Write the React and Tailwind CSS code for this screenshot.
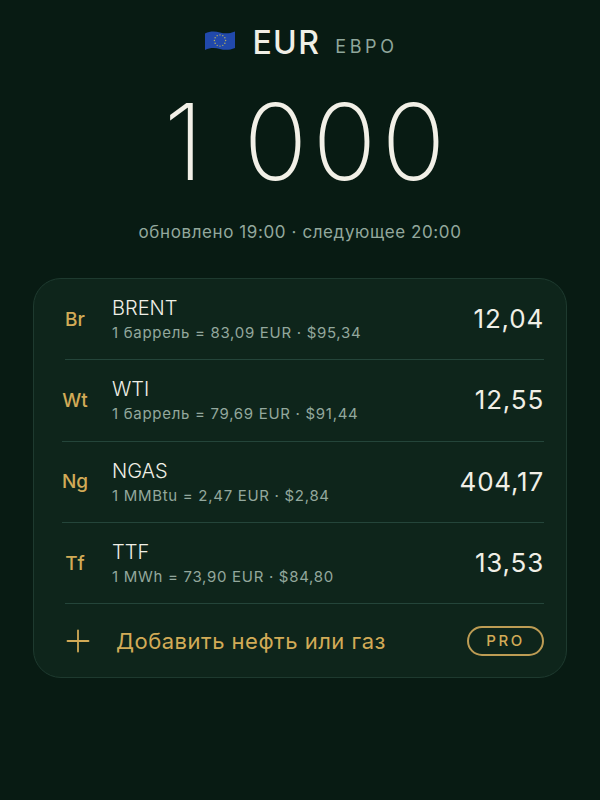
import React from 'react';
import { Plus } from 'lucide-react';

const rows = [
  { code: 'Br', name: 'BRENT', sub: '1 баррель = 83,09 EUR · $95,34', value: '12,04', line: 'ml-[3px]' },
  { code: 'Wt', name: 'WTI', sub: '1 баррель = 79,69 EUR · $91,44', value: '12,55', line: 'ml-0' },
  { code: 'Ng', name: 'NGAS', sub: '1 MMBtu = 2,47 EUR · $2,84', value: '404,17', line: 'ml-0' },
  { code: 'Tf', name: 'TTF', sub: '1 MWh = 73,90 EUR · $84,80', value: '13,53', line: 'ml-[3px]' },
];

const EuFlag = () => {
  const stars = Array.from({ length: 12 }, (_, i) => {
    const a = (i / 12) * Math.PI * 2;
    return [15 + Math.cos(a) * 5.6, 10.5 + Math.sin(a) * 5.6];
  });
  return (
    <svg width="30" height="21" viewBox="0 0 30 21" className="mb-[3px]" aria-hidden="true">
      <path d="M0 3.5 C5 1 10 1 15 2.5 C20 4 25 3.5 30 1.5 V18 C25 20 20 20.5 15 19 C10 17.5 5 17.5 0 20 Z" fill="#2149ab" />
      {stars.map(([x, y], i) => (
        <circle key={i} cx={x} cy={y} r="0.7" fill="#b9b25c" />
      ))}
    </svg>
  );
};

export default function App() {
  return (
    <div className="w-[600px] h-[800px] overflow-hidden bg-[#081b13] font-['Inter',sans-serif] flex flex-col items-center">
      <div className="h-[84px] pl-[3px] flex items-center justify-center">
        <EuFlag />
        <span className="ml-[17px] mt-[1px] text-[32px] leading-[40px] font-medium tracking-[1.4px] text-[#f0efe6]">EUR</span>
        <span className="ml-[15px] mt-[9px] text-[18px] leading-[24px] tracking-[3.6px] text-[#8fa69b]">ЕВРО</span>
      </div>
      <div className="mt-[-7px] pl-[14px] h-[130px] text-[106px] leading-[130px] font-[150] tracking-[5px] text-[#f2f0e7]">1 000</div>
      <div className="mt-[13px] text-[17px] leading-[24px] tracking-[0.6px] text-[#93a89d]">обновлено 19:00 · следующее 20:00</div>
      <div className="mt-[34px] w-[534px] h-[400px] rounded-[28px] border border-[#1e3a2f] bg-[#0e251b] pl-[28px] pr-[22px] flex flex-col">
        {rows.map((row) => (
          <div key={row.code}>
            <div className="h-[80.3px] flex items-center">
              <div className="w-[26px] pt-[2px] text-center text-[19px] font-medium text-[#d2ab57]">{row.code}</div>
              <div className="ml-[24px] flex-1 pt-[1px]">
                <div className="text-[20px] leading-[26px] font-[350] text-[#f0efe6]">{row.name}</div>
                <div className="mt-[1px] text-[15px] leading-[22px] tracking-[0.7px] text-[#93a89d]">{row.sub}</div>
              </div>
              <div className="text-[26px] leading-[32px] tracking-[0.8px] text-[#f0efe6]">{row.value}</div>
            </div>
            <div className={`h-px bg-[#24453a] ${row.line}`} />
          </div>
        ))}
        <div className="flex-1 flex items-center pt-[1px]">
          <Plus size={36} strokeWidth={1.2} className="ml-[-2px] text-[#d2ab57]" />
          <span className="ml-[20px] flex-1 text-[22px] leading-[28px] tracking-[0.5px] text-[#d2ab57]">Добавить нефть или газ</span>
          <span className="w-[77px] h-[30px] rounded-full border-2 border-[#bd9c54] flex items-center justify-center text-[15px] font-medium tracking-[2.5px] text-[#d2ab57]">PRO</span>
        </div>
      </div>
    </div>
  );
}
